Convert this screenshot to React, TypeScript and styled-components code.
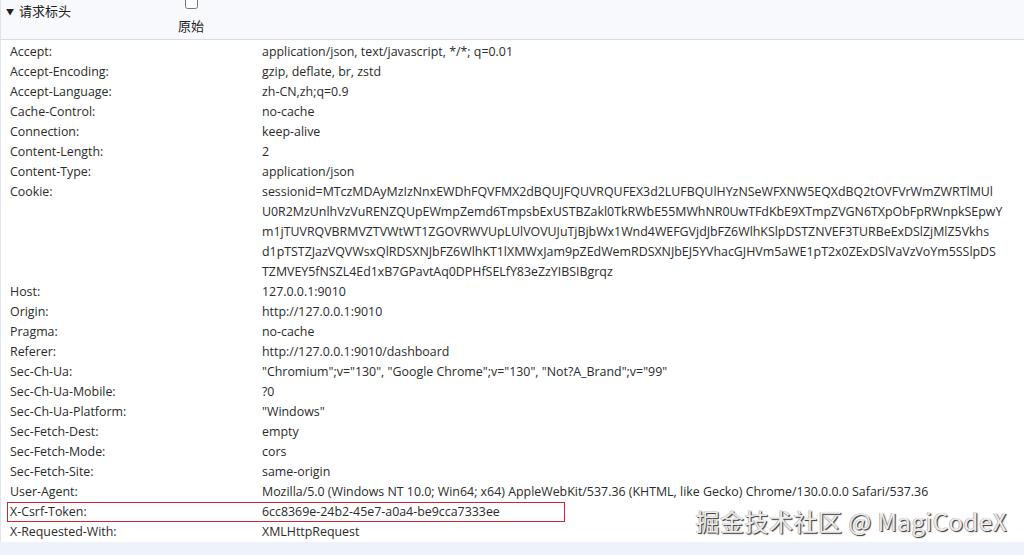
import React from "react";
import styled, { createGlobalStyle, css } from "styled-components";

const Global = createGlobalStyle`
  html, body { margin: 0; padding: 0; background: #eef2fa; }
  body {
    font-family: "Open Sans", "Noto Sans CJK SC", sans-serif;
    font-size: 12.4px;
    color: #2b2b2b;
  }
`;

const Page = styled.div`
  position: relative;
  width: 1024px;
  height: 555px;
  overflow: hidden;
  background: #eef2fa;
`;

const Panel = styled.section`
  background: #ffffff;
  border-left: 1px solid #dfe2ef;
`;

const Header = styled.div`
  display: flex;
  align-items: flex-start;
  height: 39px;
  background: #f8f9fc;
  border-bottom: 1px solid #d9dce6;
  box-sizing: content-box;
`;

const Summary = styled.div`
  width: 165px;
  padding-left: 5px;
  line-height: 22px;
  font-family: "Noto Sans CJK SC", sans-serif;
  font-size: 13px;
  color: #222;
  white-space: nowrap;
`;

const Triangle = styled.span`
  display: inline-block;
  font-size: 8px;
  margin-right: 5px;
  vertical-align: 1px;
`;

const Option = styled.label`
  display: flex;
  flex-direction: column;
  align-items: center;
  width: 40px;
  margin-top: -4px;
  font-family: "Noto Sans CJK SC", sans-serif;
  font-size: 13px;
  line-height: 18px;
  color: #222;
`;

const Check = styled.input`
  width: 13px;
  height: 13px;
  margin: 0 0 8px 0;
`;

const Rows = styled.div`
  padding: 2px 0 0 0;
`;

const marked = css`
  &::after {
    content: "";
    position: absolute;
    left: 6px;
    top: 0;
    width: 558px;
    height: 20px;
    border: 1px solid #d0262f;
    box-sizing: border-box;
  }
`;

const Row = styled.div<{ $marked?: boolean }>`
  position: relative;
  display: grid;
  grid-template-columns: 252px 1fr;
  padding-left: 9px;
  line-height: 20px;
  ${(p) => (p.$marked ? marked : "")}
`;

const Name = styled.div`
  white-space: nowrap;
`;

const Value = styled.div`
  white-space: nowrap;
`;

const Line = styled.div``;

const Watermark = styled.div`
  position: absolute;
  right: 17px;
  top: 503px;
  font-family: "Noto Sans CJK SC", sans-serif;
  font-size: 24px;
  letter-spacing: 0.5px;
  color: #ececec;
  text-shadow: 1px 1px 0 #4a4a4a, -0.5px -0.5px 0 #9a9a9a, 1px 1px 2px rgba(0,0,0,0.4);
  white-space: nowrap;
`;

const cookie = [
  "sessionid=MTczMDAyMzIzNnxEWDhFQVFMX2dBQUJFQUVRQUFEX3d2LUFBQUlHYzNSeWFXNW5EQXdBQ2tOVFVrWmZWRTlMUl",
  "U0R2MzUnlhVzVuRENZQUpEWmpZemd6TmpsbExUSTBZakl0TkRWbE55MWhNR0UwTFdKbE9XTmpZVGN6TXpObFpRWnpkSEpwY",
  "m1jTUVRQVBRMVZTVWtWT1ZGOVRWVUpLUlVOVUJuTjBjbWx1Wnd4WEFGVjdJbFZ6WlhKSlpDSTZNVEF3TURBeExDSlZjMlZ5Vkhs",
  "d1pTSTZJazVQVWsxQlRDSXNJbFZ6WlhKT1lXMWxJam9pZEdWemRDSXNJbEJ5YVhacGJHVm5aWE1pT2x0ZExDSlVaVzVoYm5SSlpDS",
  "TZMVEY5fNSZL4Ed1xB7GPavtAq0DPHfSELfY83eZzYIBSIBgrqz",
];

const headers: { name: string; value: string[]; marked?: boolean }[] = [
  { name: "Accept:", value: ["application/json, text/javascript, */*; q=0.01"] },
  { name: "Accept-Encoding:", value: ["gzip, deflate, br, zstd"] },
  { name: "Accept-Language:", value: ["zh-CN,zh;q=0.9"] },
  { name: "Cache-Control:", value: ["no-cache"] },
  { name: "Connection:", value: ["keep-alive"] },
  { name: "Content-Length:", value: ["2"] },
  { name: "Content-Type:", value: ["application/json"] },
  { name: "Cookie:", value: cookie },
  { name: "Host:", value: ["127.0.0.1:9010"] },
  { name: "Origin:", value: ["http://127.0.0.1:9010"] },
  { name: "Pragma:", value: ["no-cache"] },
  { name: "Referer:", value: ["http://127.0.0.1:9010/dashboard"] },
  { name: "Sec-Ch-Ua:", value: ['"Chromium";v="130", "Google Chrome";v="130", "Not?A_Brand";v="99"'] },
  { name: "Sec-Ch-Ua-Mobile:", value: ["?0"] },
  { name: "Sec-Ch-Ua-Platform:", value: ['"Windows"'] },
  { name: "Sec-Fetch-Dest:", value: ["empty"] },
  { name: "Sec-Fetch-Mode:", value: ["cors"] },
  { name: "Sec-Fetch-Site:", value: ["same-origin"] },
  {
    name: "User-Agent:",
    value: [
      "Mozilla/5.0 (Windows NT 10.0; Win64; x64) AppleWebKit/537.36 (KHTML, like Gecko) Chrome/130.0.0.0 Safari/537.36",
    ],
  },
  { name: "X-Csrf-Token:", value: ["6cc8369e-24b2-45e7-a0a4-be9cca7333ee"], marked: true },
  { name: "X-Requested-With:", value: ["XMLHttpRequest"] },
];

export default function App() {
  return (
    <Page>
      <Global />
      <Panel>
        <Header>
          <Summary>
            <Triangle>▼</Triangle>请求标头
          </Summary>
          <Option>
            <Check type="checkbox" />
            原始
          </Option>
        </Header>
        <Rows>
          {headers.map((h) => (
            <Row key={h.name} $marked={h.marked}>
              <Name>{h.name}</Name>
              <Value>
                {h.value.map((l, i) => (
                  <Line key={i}>{l}</Line>
                ))}
              </Value>
            </Row>
          ))}
        </Rows>
      </Panel>
      <Watermark>掘金技术社区 @ MagiCodeX</Watermark>
    </Page>
  );
}
